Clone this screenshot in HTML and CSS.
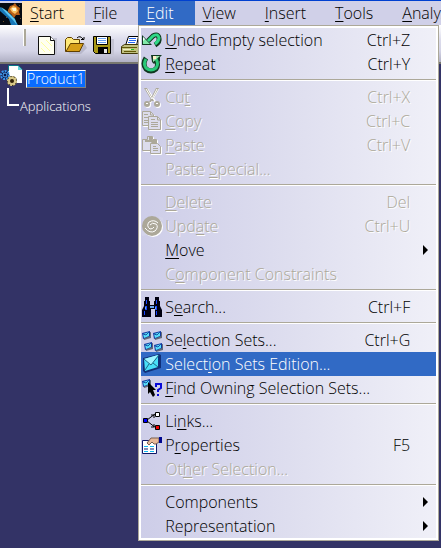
FILE: index.html
```html
<!DOCTYPE html>
<html lang="en">
<head>
    <meta charset="UTF-8">
    <meta name="viewport" content="width=device-width, initial-scale=1.0">
    <title>Product1</title>
    <link rel="stylesheet" href="styles.css">
</head>
<body>
    <nav class="menubar">
        <svg class="logo" viewBox="0 0 22 22">
            <rect width="22" height="22" fill="#050a12"/>
            <path d="M0 4L5 7L14 15L18 22H11L9 16L0 8z" fill="#1878b8"/>
            <path d="M1 4L7 8L15 16L17 22L13 17L6 10z" fill="#5cc8f0"/>
            <path d="M8 7L10 3L13 2L15 0L17 3L20 5L19 9L20 12L16 12L14 15L11 11L8 9z" fill="#b86018"/>
            <path d="M10 6L13 3L16 4L18 8L15 11L12 9z" fill="#f8c060"/>
            <path d="M12 5h4v3h-3z" fill="#fff8d8"/>
            <path d="M6 14h1v1H6zM19 2h1v1h-1zM3 18h1v1H3zM20 15h1v1h-1z" fill="#705028"/>
        </svg>
        <button class="menu-title start"><u>S</u>tart</button>
        <button class="menu-title"><u>F</u>ile</button>
        <div class="menu-holder">
            <button class="menu-title open"><u>E</u>dit</button>
            <div class="menu">
                <button class="item">
                    <svg class="icon" viewBox="0 0 22 24">
                        <path d="M7 13L12 8Q17 5 18 10Q19 14 14 17" fill="none" stroke="#103820" stroke-width="5"/>
                        <path d="M1 7L11 17H1z" fill="#103820"/>
                        <path d="M7 13L12 8Q17 5 18 10Q18 13 14 16" fill="none" stroke="#30d888" stroke-width="3"/>
                        <path d="M2 9L9 16H2z" fill="#80e8a8"/>
                        <path d="M2 9v4l2-2z" fill="#fff"/>
                    </svg>
                    <span class="label"><u>U</u>ndo Empty selection</span><span class="key">Ctrl+Z</span>
                </button>
                <button class="item">
                    <svg class="icon" viewBox="0 0 22 24">
                        <path d="M5 6Q1 12 5 17Q10 21 15 17Q18 13 15 8" fill="none" stroke="#103820" stroke-width="5"/>
                        <path d="M10 3H21L19 5L19 10L17 8L13 12L11 10z" fill="#103820"/>
                        <path d="M5 7Q2 12 5 16Q10 20 15 16Q18 12 15 7" fill="none" stroke="#28c878" stroke-width="3"/>
                        <path d="M12 4H19L12 10z" fill="#a0e8b0"/>
                        <path d="M12 4h3v3h-3z" fill="#fff0c8"/>
                    </svg>
                    <span class="label"><u>R</u>epeat</span><span class="key">Ctrl+Y</span>
                </button>
                <hr>
                <button class="item" disabled>
                    <svg class="icon" viewBox="0 0 22 24">
                        <g fill="none" stroke="#fff" stroke-width="2" transform="translate(1 1)">
                            <path d="M5 3L14 17M16 3L8 17"/><circle cx="6" cy="19" r="2"/><circle cx="16" cy="19" r="2"/>
                        </g>
                        <path d="M3 3h3l7 13h-2zM15 3h3l-8 14H8z" fill="#aca899"/>
                        <path d="M5 4l6 10M16 4l-5 10" stroke="#fff"/>
                        <circle cx="6" cy="19" r="3" fill="#aca899"/><circle cx="16" cy="19" r="3" fill="#aca899"/>
                        <path d="M5 18h2v1H5zM15 18h2v1h-2z" fill="#fff"/>
                    </svg>
                    <span class="label">Cu<u>t</u></span><span class="key">Ctrl+X</span>
                </button>
                <button class="item" disabled>
                    <svg class="icon" viewBox="0 0 22 24">
                        <g fill="none" stroke="#fff" transform="translate(1 1)">
                            <path d="M1.500 2.500H9.500L12.500 5.500V16.500H1.500zM7.500 7.500H16.500L19.500 10.500V20.500H7.500z"/>
                        </g>
                        <g fill="#dcdcec" stroke="#aca899">
                            <path d="M1.500 2.500H9.500L12.500 5.500V16.500H1.500z"/>
                            <path d="M9.500 3v3h3M3 5.500h4M3 8.500h5M3 11.500h4M3 13.500h4"/>
                            <path d="M7.500 7.500H16.500L19.500 10.500V20.500H7.500z"/>
                            <path d="M16.500 8v3h3M10 10.500h4M10 13.500h7M10 15.500h7M10 17.500h7"/>
                        </g>
                    </svg>
                    <span class="label"><u>C</u>opy</span><span class="key">Ctrl+C</span>
                </button>
                <button class="item" disabled>
                    <svg class="icon" viewBox="0 0 22 24">
                        <path d="M2.500 7.500H7.500V4.500H12.500V7.500H16.500V18.500H2.500z" fill="none" stroke="#fff"/>
                        <path d="M1.500 6.500H6.500V3.500H11.500V6.500H15.500V17.500H1.500z" fill="#dcdcec" stroke="#aca899"/>
                        <path d="M4 7h10v2H4zM8 4h3v3H8zM10 9l5-3v6h-3z" fill="#aca899"/>
                        <path d="M9.500 10.500H16.500L19.500 13.500V20.500H9.500z" fill="#dcdcec" stroke="#aca899"/>
                        <path d="M12 13.500h3M12 15.500h5M12 17.500h5" stroke="#aca899"/>
                        <path d="M10 21.500H20.500V14" fill="none" stroke="#fff"/>
                    </svg>
                    <span class="label"><u>P</u>aste</span><span class="key">Ctrl+V</span>
                </button>
                <button class="item" disabled>
                    <span class="icon"></span>
                    <span class="label">Paste <u>S</u>pecial...</span>
                </button>
                <hr>
                <button class="item" disabled>
                    <span class="icon"></span>
                    <span class="label"><u>D</u>elete</span><span class="key">Del</span>
                </button>
                <button class="item" disabled>
                    <svg class="icon" viewBox="0 0 22 24">
                        <circle cx="12" cy="13" r="10" fill="#fff"/>
                        <circle cx="11" cy="12" r="10" fill="#aca899"/>
                        <path d="M17 9Q13 5 8 8Q5 12 9 15Q12 15 13 13M4 14Q9 20 14 17Q18 13 15 10Q11 8 9 11" fill="none" stroke="#fff" stroke-width="1"/>
                        <path d="M17 2l5 2v4zM0 15l1 7 5-1z" fill="#d4d4ea"/>
                    </svg>
                    <span class="label">Upd<u>a</u>te</span><span class="key">Ctrl+U</span>
                </button>
                <button class="item">
                    <span class="icon"></span>
                    <span class="label"><u>M</u>ove</span><span class="arrow"></span>
                </button>
                <button class="item" disabled>
                    <span class="icon"></span>
                    <span class="label">C<u>o</u>mponent Constraints</span>
                </button>
                <hr>
                <button class="item">
                    <svg class="icon" viewBox="0 0 22 24">
                        <path d="M4 2h4v4h1v4h4V6h1V2h4v4h1v5l2 4v7h-7v-8h-4v8H1v-7l2-4V6h1z" fill="#000010"/>
                        <path d="M5 5h1v4H5zM15 5h1v4h-1zM4 11h2v4H4zM14 11h2v4h-2zM3 16h1v4H3zM15 16h1v4h-1z" fill="#1848ff"/>
                        <path d="M4 12h1v2H4zM14 12h1v2h-1zM9 11h4v2H9z" fill="#68a8f0"/>
                    </svg>
                    <span class="label">S<u>e</u>arch...</span><span class="key">Ctrl+F</span>
                </button>
                <hr>
                <button class="item">
                    <svg class="icon" viewBox="0 0 22 24">
                        <defs>
                            <g id="envelope">
                                <path d="M1 3L9 1V7L2 9z" fill="#606878"/>
                                <path d="M0 2L8 0V5L1 8z" fill="#1038a0"/>
                                <path d="M1 3L7 1V5L2 7z" fill="#58e0f8"/>
                                <path d="M1 3L4 4L7 1" fill="none" stroke="#1850a8"/>
                            </g>
                        </defs>
                        <use href="#envelope" x="1" y="3"/><use href="#envelope" x="12" y="3"/>
                        <use href="#envelope" x="3" y="14"/><use href="#envelope" x="13" y="15"/>
                    </svg>
                    <span class="label">Se<u>l</u>ection Sets...</span><span class="key">Ctrl+G</span>
                </button>
                <button class="item selected">
                    <svg class="icon" viewBox="0 0 22 24">
                        <path d="M2 6L18 2L20 3V16L4 21L2 19z" fill="#103078"/>
                        <path d="M3 7L17 3V15L4 19z" fill="#48e0f8"/>
                        <path d="M3 7L17 3L10 13z" fill="#a0f4ff"/>
                        <path d="M3 7L10 13L18 3M4 18L8 12M17 15L12 11" fill="none" stroke="#206888"/>
                    </svg>
                    <span class="label">Select<u>i</u>on Sets Edition...</span>
                </button>
                <button class="item">
                    <svg class="icon" viewBox="0 0 22 24">
                        <use href="#envelope" x="1" y="3"/>
                        <path d="M7 6L15 14H12L14 19L12 21L9 16L7 18z" fill="#000"/>
                        <path d="M15 11V8h5v4l-3 2v2M17 18v2" fill="none" stroke="#0808d8" stroke-width="2"/>
                    </svg>
                    <span class="label"><u>F</u>ind Owning Selection Sets...</span>
                </button>
                <hr>
                <button class="item">
                    <svg class="icon" viewBox="0 0 22 24">
                        <path d="M6 11L14 5M6 12L15 19" stroke="#000"/>
                        <path d="M10 6h3v3M10 18h3v-3" fill="none" stroke="#000"/>
                        <path d="M2.500 9.500h4v4h-4z" fill="#0000ff" stroke="#000"/>
                        <path d="M14.500 3.500h4v4h-4z" fill="#fff" stroke="#000"/>
                        <path d="M14.500 16.500h4v4h-4z" fill="#f00000" stroke="#000"/>
                    </svg>
                    <span class="label">Li<u>n</u>ks...</span>
                </button>
                <button class="item">
                    <svg class="icon" viewBox="0 0 22 24">
                        <path d="M1.500 7.500H15.500V20.500H1.500z" fill="#fff" stroke="#101868"/>
                        <path d="M3 13.500h4M9 13.500h4M3 18.500h4M9 18.500h4" stroke="#10b8f0"/>
                        <path d="M3 16h4M9 16h4" stroke="#101868"/>
                        <path d="M6 10L10 5H18V9L15 11H13L11 9L8 12z" fill="#e8b898" stroke="#786050"/>
                        <path d="M18 4h3v6h-3z" fill="#000890"/>
                    </svg>
                    <span class="label">P<u>r</u>operties</span><span class="key">F5</span>
                </button>
                <button class="item" disabled>
                    <span class="icon"></span>
                    <span class="label">Ot<u>h</u>er Selection...</span>
                </button>
                <hr>
                <button class="item">
                    <span class="icon"></span>
                    <span class="label">Components</span><span class="arrow"></span>
                </button>
                <button class="item">
                    <span class="icon"></span>
                    <span class="label">Representation</span><span class="arrow"></span>
                </button>
            </div>
        </div>
        <button class="menu-title"><u>V</u>iew</button>
        <button class="menu-title"><u>I</u>nsert</button>
        <button class="menu-title"><u>T</u>ools</button>
        <button class="menu-title"><u>A</u>nalyze</button>
    </nav>

    <div class="toolbar">
        <span class="grip"></span>
        <button class="tool" aria-label="New">
            <svg viewBox="0 0 22 22">
                <path d="M3 4h17v17H3z" fill="#c4c4d4"/>
                <path d="M1.500 2.500H13.500L17.500 6.500V20.500H1.500z" fill="#fffff0" stroke="#101010"/>
                <path d="M13.500 2.500v4h4" fill="#fff" stroke="#101010"/>
                <path d="M4 8l9 9M4 14l4 4M9 6l6 6" stroke="#ffffa0"/>
            </svg>
        </button>
        <button class="tool" aria-label="Open">
            <svg viewBox="0 0 22 22">
                <path d="M3 18l16-9 3 5-6 6H5z" fill="#b8b8cc"/>
                <path d="M.500 17.500V5.500L2.500 3.500H6.500L8.500 5.500H14.500V17.500z" fill="#ffe878" stroke="#604000"/>
                <path d="M1 17.500L5.500 9.500H18.500L14.500 17.500z" fill="#d8a018" stroke="#604000"/>
                <path d="M12 4Q15 1 18 5M16 5.500h3V3" fill="none" stroke="#000"/>
            </svg>
        </button>
        <button class="tool" aria-label="Save">
            <svg viewBox="0 0 22 22">
                <path d="M3 5h18v16H3z" fill="#c4c4d4"/>
                <path d="M.500 2.500H17.500V19.500H2.500L.500 17.500z" fill="#a89818" stroke="#000"/>
                <path d="M3.500 2.500h11v8h-11z" fill="#fff" stroke="#000"/>
                <path d="M5 4.500h8M5 6.500h8M5 8.500h8" stroke="#68a0f0"/>
                <path d="M5 13h10v6H5z" fill="#000"/>
                <path d="M11 15h3v4h-3z" fill="#e8e8e8"/>
            </svg>
        </button>
        <button class="tool" aria-label="Print">
            <svg viewBox="0 0 22 22">
                <path d="M4.500 11.500L7.500 2.500H17.500L15.500 11.500z" fill="#fff" stroke="#000"/>
                <path d="M8 4.500h7M8 6.500h7M7 8.500h7" stroke="#2868f0"/>
                <path d="M.500 12.500L3.500 10.500H20.500V15.500L16.500 19.500H.500z" fill="#c0c080" stroke="#403808"/>
                <path d="M1 13.500h15M3 17.500h12" stroke="#605808"/>
                <path d="M2 15.500h9" stroke="#f0f0c0"/>
                <path d="M10 15h3v1h-3z" fill="#20c020"/>
            </svg>
        </button>
    </div>

    <main class="tree">
        <div class="node">
            <svg class="product" viewBox="0 0 24 24">
                <path d="M8 2H18L22 6V19H8z" fill="#fff"/>
                <path d="M8.500 7V1.500H18.500L22.500 5.500" fill="none" stroke="#087888"/>
                <path d="M18 2v4h4z" fill="#60d8e0"/>
                <circle cx="5" cy="11" r="4" fill="#081848" stroke="#3898f0" stroke-width="2" stroke-dasharray="2 1"/>
                <circle cx="5" cy="11" r="2" fill="#081848" stroke="#58b0ff"/>
                <circle cx="12" cy="17" r="5" fill="#282010"/>
                <circle cx="12" cy="17" r="4" fill="#d8c888" stroke="#d8c888" stroke-width="2" stroke-dasharray="2 1"/>
                <circle cx="12" cy="17" r="2" fill="#302008"/>
            </svg>
            <span class="name">Product1</span>
        </div>
        <div class="node"><span class="branch"></span><span class="child">Applications</span></div>
    </main>
</body>
</html>
```
FILE: styles.css
```css
* {
    margin: 0;
    padding: 0;
    box-sizing: border-box;
}
body {
    min-height: 100vh;
    font-family: "Open Sans", "Noto Sans", sans-serif;
    font-size: 16px;
    font-weight: 300;
    color: #000;
    background: #333366;
    overflow: hidden;
}
button {
    font: inherit;
    color: inherit;
    background: none;
    border: none;
    text-align: left;
    white-space: nowrap;
}
u {
    text-decoration-thickness: 1px;
    text-underline-offset: 2px;
}
.menubar {
    display: flex;
    height: 25px;
    border-top: 1px solid #0040d0;
    background: #d0d0e8;
}
.logo {
    flex: none;
    width: 22px;
    height: 24px;
    padding-top: 2px;
}
.menu-title {
    flex: none;
    height: 24px;
    padding: 0 21px 0 8px;
    line-height: 24px;
}
.start {
    background: #ffe4b8;
}
.open {
    color: #fff;
    background: #316ac5;
}
.menu-holder {
    position: relative;
    flex: none;
}
.menu {
    position: absolute;
    top: 24px;
    left: 0;
    z-index: 1;
    width: 301px;
    border: 1px solid #aca899;
    background: linear-gradient(to right, #cdcde8, #dedeef 50%, #f0f0f8);
    box-shadow: inset 0 0 0 2px #fff;
    padding: 2px;
}
.item {
    display: flex;
    align-items: center;
    width: 100%;
    height: 24px;
    line-height: 24px;
}
.item:disabled {
    color: #aca899;
    text-shadow: 1px 1px #fff;
}
.selected {
    color: #fff;
    background: #316ac5;
}
.icon {
    flex: none;
    width: 22px;
    height: 24px;
    margin-right: 2px;
}
.label {
    flex: 1;
}
.key {
    margin-right: 26px;
}
.arrow {
    margin-right: 8px;
    border: 5px solid transparent;
    border-left-color: #000;
    border-right: none;
}
.menu hr {
    height: 2px;
    margin: 3px 0 4px;
    border: none;
    border-top: 1px solid #aca899;
    background: #fff;
}
.toolbar {
    display: flex;
    align-items: center;
    height: 39px;
    padding: 2px 0 0 23px;
    background: linear-gradient(to bottom, #ffffff, #dcdcec 40%, #d4d4e6 70%, #b0b0c4);
    border-bottom: 2px solid #77776f;
    overflow: hidden;
}
.grip {
    flex: none;
    width: 3px;
    height: 17px;
    margin: 0 11px 14px 0;
    background: #fff;
    border-right: 2px solid #aca899;
}
.tool {
    flex: none;
    width: 22px;
    height: 22px;
    margin-right: 6px;
}
.tool svg {
    display: block;
}
.tree {
    font-size: 14px;
    color: #fff;
}
.node {
    display: flex;
    align-items: flex-end;
    line-height: 16px;
}
.product {
    flex: none;
    width: 24px;
    height: 24px;
    margin-right: 2px;
}
.name {
    background: #0a6cff;
    border: 1px solid #fff;
    border-color: #fff #808080 #808080 #fff;
}
.branch {
    width: 12px;
    height: 18px;
    margin: 0 1px 8px 7px;
    border: solid #fff;
    border-width: 0 0 2px 2px;
}
.child {
    font-size: 13px;
}
```
